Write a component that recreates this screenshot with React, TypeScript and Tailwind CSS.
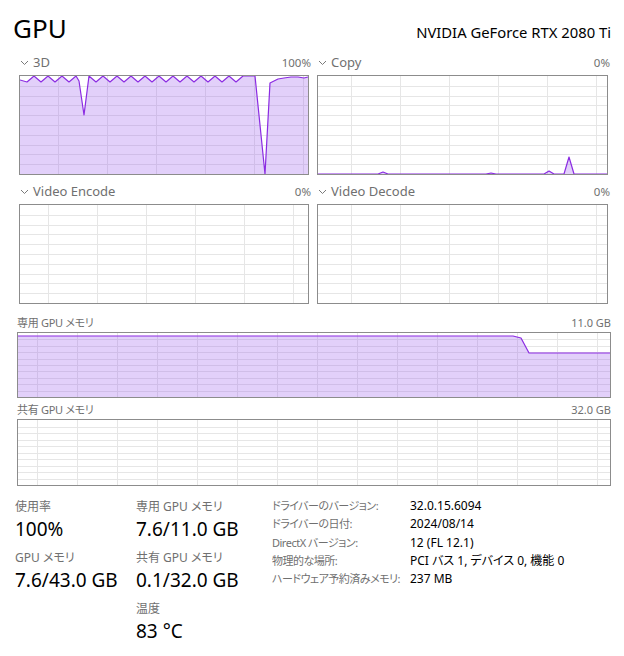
import React from 'react';

const LINE = '#8b2be2';
const FILL = 'rgba(160,100,240,0.3)';

type Pt = [number, number];

function build3d(): Pt[] {
  const pts: Pt[] = [[0, 4]];
  for (let x = 7; x <= 56; x += 7) pts.push([x, (x / 7) % 2 === 1 ? 6 : 0]);
  pts.push([59, 5], [64, 39], [69, 0]);
  for (let x = 76; x <= 223; x += 7) pts.push([x, ((x - 69) / 7) % 2 === 1 ? 6 : 0]);
  pts.push([235, 0], [245, 98], [250, 7], [258, 3], [264, 2], [271, 1], [278, 1], [284, 2], [288, 1]);
  return pts;
}

const copyPts: Pt[] = [
  [0, 98], [60, 98], [65, 96], [70, 98], [168, 98], [173, 97], [178, 98],
  [226, 98], [231, 95], [236, 98], [246, 98], [251, 81], [256, 98], [289, 98],
];

const memPts: Pt[] = [[0, 3], [495, 3], [503, 5], [511, 20], [592, 20]];

function Chevron() {
  return (
    <svg width="9" height="6" viewBox="0 0 9 6" className="shrink-0">
      <polyline points="1,1 4.5,4.5 8,1" fill="none" stroke="#7a7a7a" strokeWidth="1" />
    </svg>
  );
}

function Graph({
  w,
  h,
  offset,
  step,
  pts,
}: {
  w: number;
  h: number;
  offset: number;
  step: number;
  pts?: Pt[];
}) {
  const rows = Array.from({ length: 9 }, (_, i) => ((i + 1) * h) / 10);
  const cols: number[] = [];
  for (let x = offset; x < w; x += step) cols.push(x);
  const line = pts ? pts.map((p) => p.join(',')).join(' ') : '';
  const area = pts ? `0,${h} ${line} ${w},${h}` : '';
  return (
    <div className="border border-[#8c8c8c] bg-white" style={{ width: w + 2, height: h + 2 }}>
      <svg width={w} height={h} viewBox={`0 0 ${w} ${h}`} className="block">
        {rows.map((y) => (
          <line key={'r' + y} x1={0} x2={w} y1={Math.round(y) + 0.5} y2={Math.round(y) + 0.5} stroke="#e6e6e6" strokeWidth="1" />
        ))}
        {cols.map((x) => (
          <line key={'c' + x} x1={x + 0.5} x2={x + 0.5} y1={0} y2={h} stroke="#e6e6e6" strokeWidth="1" />
        ))}
        {pts && <polygon points={area} fill={FILL} />}
        {pts && <polyline points={line} fill="none" stroke={LINE} strokeWidth="1.2" strokeLinejoin="round" />}
      </svg>
    </div>
  );
}

function EngineCell({
  name,
  pct,
  w,
  offset,
  pts,
}: {
  name: string;
  pct: string;
  w: number;
  offset: number;
  pts?: Pt[];
}) {
  return (
    <div className="flex flex-col">
      <div className="flex h-[24px] items-center justify-between text-[#707070]">
        <div className="flex items-center gap-[4px] pl-[1px]">
          <Chevron />
          <span className="text-[13px]">{name}</span>
        </div>
        <span className="text-[11.5px]">{pct}</span>
      </div>
      <Graph w={w} h={98} offset={offset} step={49} pts={pts} />
    </div>
  );
}

function Stat({ label, value }: { label: string; value: string }) {
  return (
    <div className="mb-[6px]">
      <div className="h-[20px] whitespace-nowrap text-[12px] leading-[20px] text-[#707070]">{label}</div>
      <div className="h-[25px] whitespace-nowrap text-[19px] leading-[25px] text-black">{value}</div>
    </div>
  );
}

const info: [string, string][] = [
  ['ドライバーのバージョン:', '32.0.15.6094'],
  ['ドライバーの日付:', '2024/08/14'],
  ['DirectX バージョン:', '12 (FL 12.1)'],
  ['物理的な場所:', 'PCI バス 1, デバイス 0, 機能 0'],
  ['ハードウェア予約済みメモリ:', '237 MB'],
];

export default function App() {
  return (
    <div className="h-[656px] w-[624px] overflow-hidden bg-white font-['Noto_Sans','Noto_Sans_CJK_JP',sans-serif] text-black [font-feature-settings:'palt']">
      <div className="flex h-[51px] items-end justify-between pb-[7px] pl-[13px] pr-[13px]">
        <span className="text-[26px] leading-[32px]">GPU</span>
        <span className="pb-[2px] text-[14.8px] leading-[20px]">NVIDIA GeForce RTX 2080 Ti</span>
      </div>

      <div className="flex gap-[6px] pl-[19px]">
        <div className="flex w-[292px] flex-col gap-[5px]">
          <EngineCell name="3D" pct="100%" w={288} offset={38} pts={build3d()} />
          <EngineCell name="Video Encode" pct="0%" w={288} offset={28} />
        </div>
        <div className="flex w-[293px] flex-col gap-[5px]">
          <EngineCell name="Copy" pct="0%" w={289} offset={33} pts={copyPts} />
          <EngineCell name="Video Decode" pct="0%" w={289} offset={33} />
        </div>
      </div>

      <div className="mt-[10px] pl-[17px]">
        <div className="flex h-[18px] w-[594px] items-center justify-between text-[11px] text-[#707070]">
          <span className="tracking-[-0.3px]">専用 GPU メモリ</span>
          <span>11.0 GB</span>
        </div>
        <Graph w={592} h={64} offset={19} step={40} pts={memPts} />
        <div className="mt-[3px] flex h-[18px] w-[594px] items-center justify-between text-[11px] text-[#707070]">
          <span className="tracking-[-0.3px]">共有 GPU メモリ</span>
          <span>32.0 GB</span>
        </div>
        <Graph w={592} h={65} offset={19} step={40} />
      </div>

      <div className="mt-[11px] flex">
        <div className="w-[136px] shrink-0 pl-[15px]">
          <Stat label="使用率" value="100%" />
          <Stat label="GPU メモリ" value="7.6/43.0 GB" />
        </div>
        <div className="w-[136px] shrink-0">
          <Stat label="専用 GPU メモリ" value="7.6/11.0 GB" />
          <Stat label="共有 GPU メモリ" value="0.1/32.0 GB" />
          <Stat label="温度" value="83 °C" />
        </div>
        <div className="flex flex-col text-[12px] leading-[18.25px]">
          {info.map(([k, v]) => (
            <div key={k} className="flex whitespace-nowrap">
              <span className="w-[138px] shrink-0 text-[11px] tracking-[-0.5px] text-[#707070]">{k}</span>
              <span className="text-black">{v}</span>
            </div>
          ))}
        </div>
      </div>
    </div>
  );
}
